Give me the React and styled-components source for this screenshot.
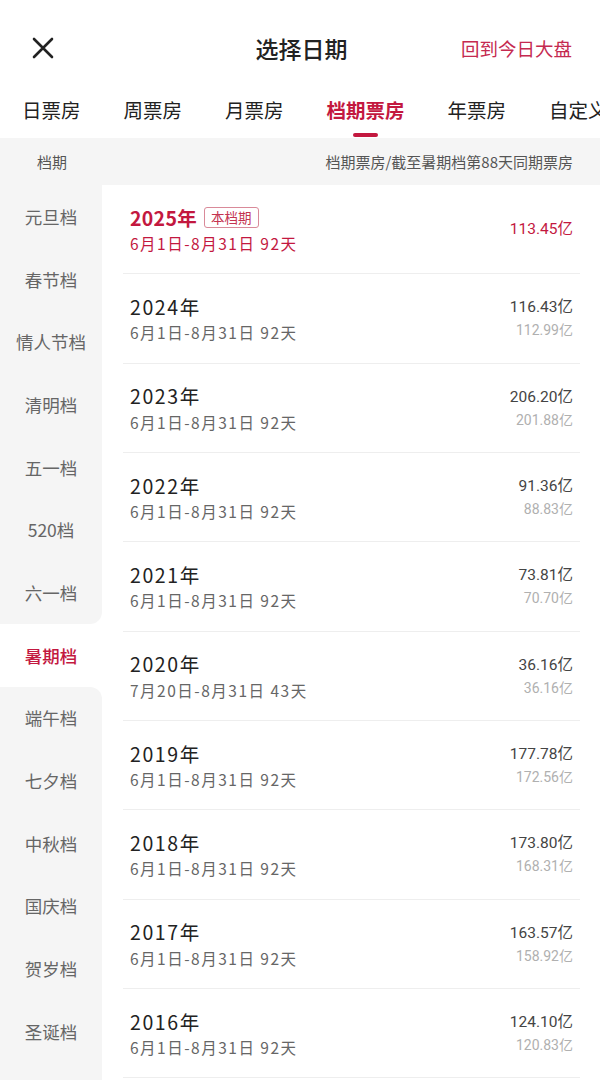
import styled, { createGlobalStyle } from 'styled-components'

const RED = '#c3183f'

const GlobalStyle = createGlobalStyle`
  html, body {
    margin: 0;
    padding: 0;
    background: #fff;
  }
  body {
    font-family: "Noto Sans CJK SC", "Noto Sans", sans-serif;
    color: #222;
  }
`

const Page = styled.div`
  width: 600px;
  min-height: 1080px;
  display: flex;
  flex-direction: column;
  background: #fff;
  overflow: hidden;
`

const Header = styled.header`
  height: 96px;
  display: grid;
  grid-template-columns: 1fr auto 1fr;
  align-items: center;
  padding: 0 28px 0 31px;
  box-sizing: border-box;
`

const CloseButton = styled.button`
  justify-self: start;
  width: 24px;
  height: 24px;
  padding: 0;
  border: 0;
  background: none;
  color: #222;
  display: flex;
`

const Title = styled.h1`
  margin: 0;
  font-size: 23px;
  font-weight: 500;
  color: #222;
`

const TodayLink = styled.a`
  justify-self: end;
  font-size: 18.5px;
  color: #c52a50;
  text-decoration: none;
`

const Tabs = styled.nav`
  height: 42px;
  display: flex;
  gap: 43px;
  padding-left: 22px;
  white-space: nowrap;
  overflow: hidden;
`

const Tab = styled.div`
  display: flex;
  flex-direction: column;
  align-items: center;
  flex-shrink: 0;
  font-size: 19.5px;
  line-height: 28px;
  color: ${(p) => (p.$active ? RED : '#222')};
  font-weight: ${(p) => (p.$active ? 700 : 400)};

  &::after {
    content: '';
    width: 25px;
    height: 4px;
    margin-top: 9px;
    border-radius: 2px;
    background: ${(p) => (p.$active ? RED : 'transparent')};
  }
`

const SubHeader = styled.div`
  height: 47px;
  display: flex;
  align-items: center;
  justify-content: space-between;
  padding: 0 27px 0 37px;
  background: #f5f5f5;
  font-size: 15px;
  color: #555;
`

const Body = styled.div`
  flex: 1;
  display: flex;
`

const Sidebar = styled.aside`
  width: 102px;
  flex-shrink: 0;
  display: flex;
  flex-direction: column;
`

const SideItem = styled.div`
  height: 62.7px;
  display: flex;
  align-items: center;
  justify-content: center;
  font-size: 17.5px;
  color: ${(p) => (p.$active ? RED : '#666')};
  font-weight: ${(p) => (p.$active ? 500 : 400)};
  background: ${(p) => (p.$active ? '#fff' : '#f5f5f5')};
  border-bottom-right-radius: ${(p) => (p.$beforeActive ? '12px' : '0')};
  border-top-right-radius: ${(p) => (p.$afterActive ? '12px' : '0')};
`

const SideFiller = styled.div`
  flex: 1;
  background: #f5f5f5;
`

const List = styled.div`
  flex: 1;
  padding: 0 20px 0 21px;
`

const Row = styled.div`
  height: 89.33px;
  box-sizing: border-box;
  display: flex;
  align-items: center;
  justify-content: space-between;
  padding: 0 7px;
  border-bottom: 1px solid #eeeeee;
`

const Info = styled.div`
  display: flex;
  flex-direction: column;
  gap: 2px;
`

const YearLine = styled.div`
  display: flex;
  align-items: center;
  gap: 7px;
  height: 26px;
`

const Year = styled.span`
  font-size: 19.5px;
  letter-spacing: ${(p) => (p.$current ? '0.3px' : '1.6px')};
  color: ${(p) => (p.$current ? RED : '#222')};
  font-weight: ${(p) => (p.$current ? 700 : 400)};
`

const Tag = styled.span`
  height: 19px;
  line-height: 19px;
  padding: 0 6px;
  border: 1px solid #d98a99;
  border-radius: 3px;
  font-size: 13.5px;
  color: #c4334f;
`

const DateRange = styled.div`
  font-size: 15.5px;
  line-height: 22px;
  letter-spacing: 1.5px;
  color: ${(p) => (p.$current ? RED : '#666')};
`

const Amounts = styled.div`
  display: flex;
  flex-direction: column;
  align-items: flex-end;
  gap: 2px;
`

const Amount = styled.span`
  font-family: Roboto, "Noto Sans CJK SC", sans-serif;
  font-size: 15.5px;
  line-height: 22px;
  color: ${(p) => (p.$current ? RED : '#444')};
`

const PrevAmount = styled.span`
  font-family: Roboto, "Noto Sans CJK SC", sans-serif;
  font-size: 14px;
  line-height: 20px;
  color: #b0b0b0;
`

const tabs = ['日票房', '周票房', '月票房', '档期票房', '年票房', '自定义']

const seasons = [
  '元旦档', '春节档', '情人节档', '清明档', '五一档', '520档', '六一档',
  '暑期档', '端午档', '七夕档', '中秋档', '国庆档', '贺岁档', '圣诞档',
]
const activeSeason = 7

const years = [
  { year: 2025, range: '6月1日-8月31日 92天', total: '113.45亿', current: true },
  { year: 2024, range: '6月1日-8月31日 92天', total: '116.43亿', prev: '112.99亿' },
  { year: 2023, range: '6月1日-8月31日 92天', total: '206.20亿', prev: '201.88亿' },
  { year: 2022, range: '6月1日-8月31日 92天', total: '91.36亿', prev: '88.83亿' },
  { year: 2021, range: '6月1日-8月31日 92天', total: '73.81亿', prev: '70.70亿' },
  { year: 2020, range: '7月20日-8月31日 43天', total: '36.16亿', prev: '36.16亿' },
  { year: 2019, range: '6月1日-8月31日 92天', total: '177.78亿', prev: '172.56亿' },
  { year: 2018, range: '6月1日-8月31日 92天', total: '173.80亿', prev: '168.31亿' },
  { year: 2017, range: '6月1日-8月31日 92天', total: '163.57亿', prev: '158.92亿' },
  { year: 2016, range: '6月1日-8月31日 92天', total: '124.10亿', prev: '120.83亿' },
]

const CloseIcon = () => (
  <svg width="24" height="24" viewBox="0 0 24 24" fill="none">
    <path d="M3 3L21 21M21 3L3 21" stroke="currentColor" strokeWidth="2.6" strokeLinecap="round" />
  </svg>
)

export default function App() {
  return (
    <Page>
      <GlobalStyle />
      <Header>
        <CloseButton aria-label="关闭">
          <CloseIcon />
        </CloseButton>
        <Title>选择日期</Title>
        <TodayLink>回到今日大盘</TodayLink>
      </Header>

      <Tabs>
        {tabs.map((t) => (
          <Tab key={t} $active={t === '档期票房'}>{t}</Tab>
        ))}
      </Tabs>

      <SubHeader>
        <span>档期</span>
        <span>档期票房/截至暑期档第88天同期票房</span>
      </SubHeader>

      <Body>
        <Sidebar>
          {seasons.map((s, i) => (
            <SideItem
              key={s}
              $active={i === activeSeason}
              $beforeActive={i === activeSeason - 1}
              $afterActive={i === activeSeason + 1}
            >
              {s}
            </SideItem>
          ))}
          <SideFiller />
        </Sidebar>

        <List>
          {years.map((y) => (
            <Row key={y.year}>
              <Info>
                <YearLine>
                  <Year $current={y.current}>{y.year}年</Year>
                  {y.current && <Tag>本档期</Tag>}
                </YearLine>
                <DateRange $current={y.current}>{y.range}</DateRange>
              </Info>
              <Amounts>
                <Amount $current={y.current}>{y.total}</Amount>
                {y.prev && <PrevAmount>{y.prev}</PrevAmount>}
              </Amounts>
            </Row>
          ))}
        </List>
      </Body>
    </Page>
  )
}
